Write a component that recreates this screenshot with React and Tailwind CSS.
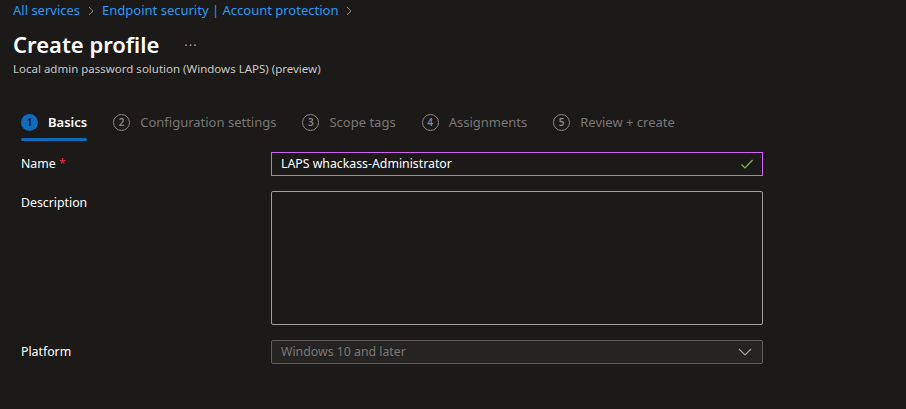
import React from "react";

const font = { fontFamily: '"Noto Sans", "Open Sans", sans-serif' };

function Step({ n, label, active }) {
  return (
    <div className="relative flex items-center h-[34px]">
      <div
        className={
          active
            ? "w-[17px] h-[17px] rounded-full bg-[#0f6cbd] flex items-center justify-center text-[10px] text-[#111] font-semibold"
            : "w-[17px] h-[17px] rounded-full border border-[#8a8886] flex items-center justify-center text-[10px] text-[#8a8886] font-semibold"
        }
      >
        {n}
      </div>
      <span
        className={
          active
            ? "ml-[10px] text-[13px] font-semibold text-white"
            : "ml-[10px] text-[13px] text-[#797775]"
        }
      >
        {label}
      </span>
      {active && <div className="absolute left-0 right-0 bottom-[-2px] h-[3px] bg-[#0f6cbd] rounded" />}
    </div>
  );
}

export default function App() {
  return (
    <div className="w-[906px] h-[409px] bg-[#1b1a19] overflow-hidden" style={font}>
      <div className="pl-[13px] pt-[1px] flex items-center text-[13px] text-[#2899f5] h-[20px]">
        <span>All services</span>
        <svg className="mx-[7px]" width="8" height="10" viewBox="0 0 8 10"><path d="M2 1l4 4-4 4" fill="none" stroke="#8a8886" strokeWidth="1" /></svg>
        <span>Endpoint security | Account protection</span>
        <svg className="ml-[7px]" width="8" height="10" viewBox="0 0 8 10"><path d="M2 1l4 4-4 4" fill="none" stroke="#8a8886" strokeWidth="1" /></svg>
      </div>
      <div className="pl-[13px] mt-[10px] flex items-center h-[28px]">
        <h1 className="text-[22px] font-semibold text-white leading-none">Create profile</h1>
        <span className="ml-[25px] mt-[3px] text-[13px] text-[#a19f9d] tracking-[1px]">···</span>
      </div>
      <div className="pl-[13px] mt-[2px] text-[11.5px] text-[#c8c6c4]">
        Local admin password solution (Windows LAPS) (preview)
      </div>
      <div className="pl-[21px] mt-[28px] flex items-center gap-[26px]">
        <Step n="1" label="Basics" active />
        <Step n="2" label="Configuration settings" />
        <Step n="3" label="Scope tags" />
        <Step n="4" label="Assignments" />
        <Step n="5" label="Review + create" />
      </div>
      <div className="pl-[21px] mt-[13px] flex flex-col">
        <div className="flex items-center h-[24px]">
          <div className="w-[250px] text-[12.3px] text-white">
            Name <span className="text-[#e0323b]">*</span>
          </div>
          <div className="w-[492px] h-[24px] border border-[#d261f0] flex items-center pl-[9px] pr-[8px]">
            <span className="flex-1 text-[12.3px] text-white">LAPS whackass-Administrator</span>
            <svg width="14" height="12" viewBox="0 0 14 12"><path d="M1.5 6.5l3.5 3.5 7.5-8" fill="none" stroke="#7fba52" strokeWidth="1.2" /></svg>
          </div>
        </div>
        <div className="flex mt-[15px]">
          <div className="w-[250px] text-[12.3px] text-white pt-[3px]">Description</div>
          <div className="w-[492px] h-[134px] border border-[#a19f9d] rounded-[2px]" />
        </div>
        <div className="flex items-center mt-[15px] h-[24px]">
          <div className="w-[250px] text-[12.3px] text-white">Platform</div>
          <div className="w-[492px] h-[24px] border border-[#605e5c] bg-[#252423] rounded-[2px] flex items-center pl-[9px] pr-[10px]">
            <span className="flex-1 text-[12.3px] text-[#797775]">Windows 10 and later</span>
            <svg width="14" height="8" viewBox="0 0 14 8"><path d="M1 1l6 6 6-6" fill="none" stroke="#a19f9d" strokeWidth="1.2" /></svg>
          </div>
        </div>
      </div>
    </div>
  );
}
